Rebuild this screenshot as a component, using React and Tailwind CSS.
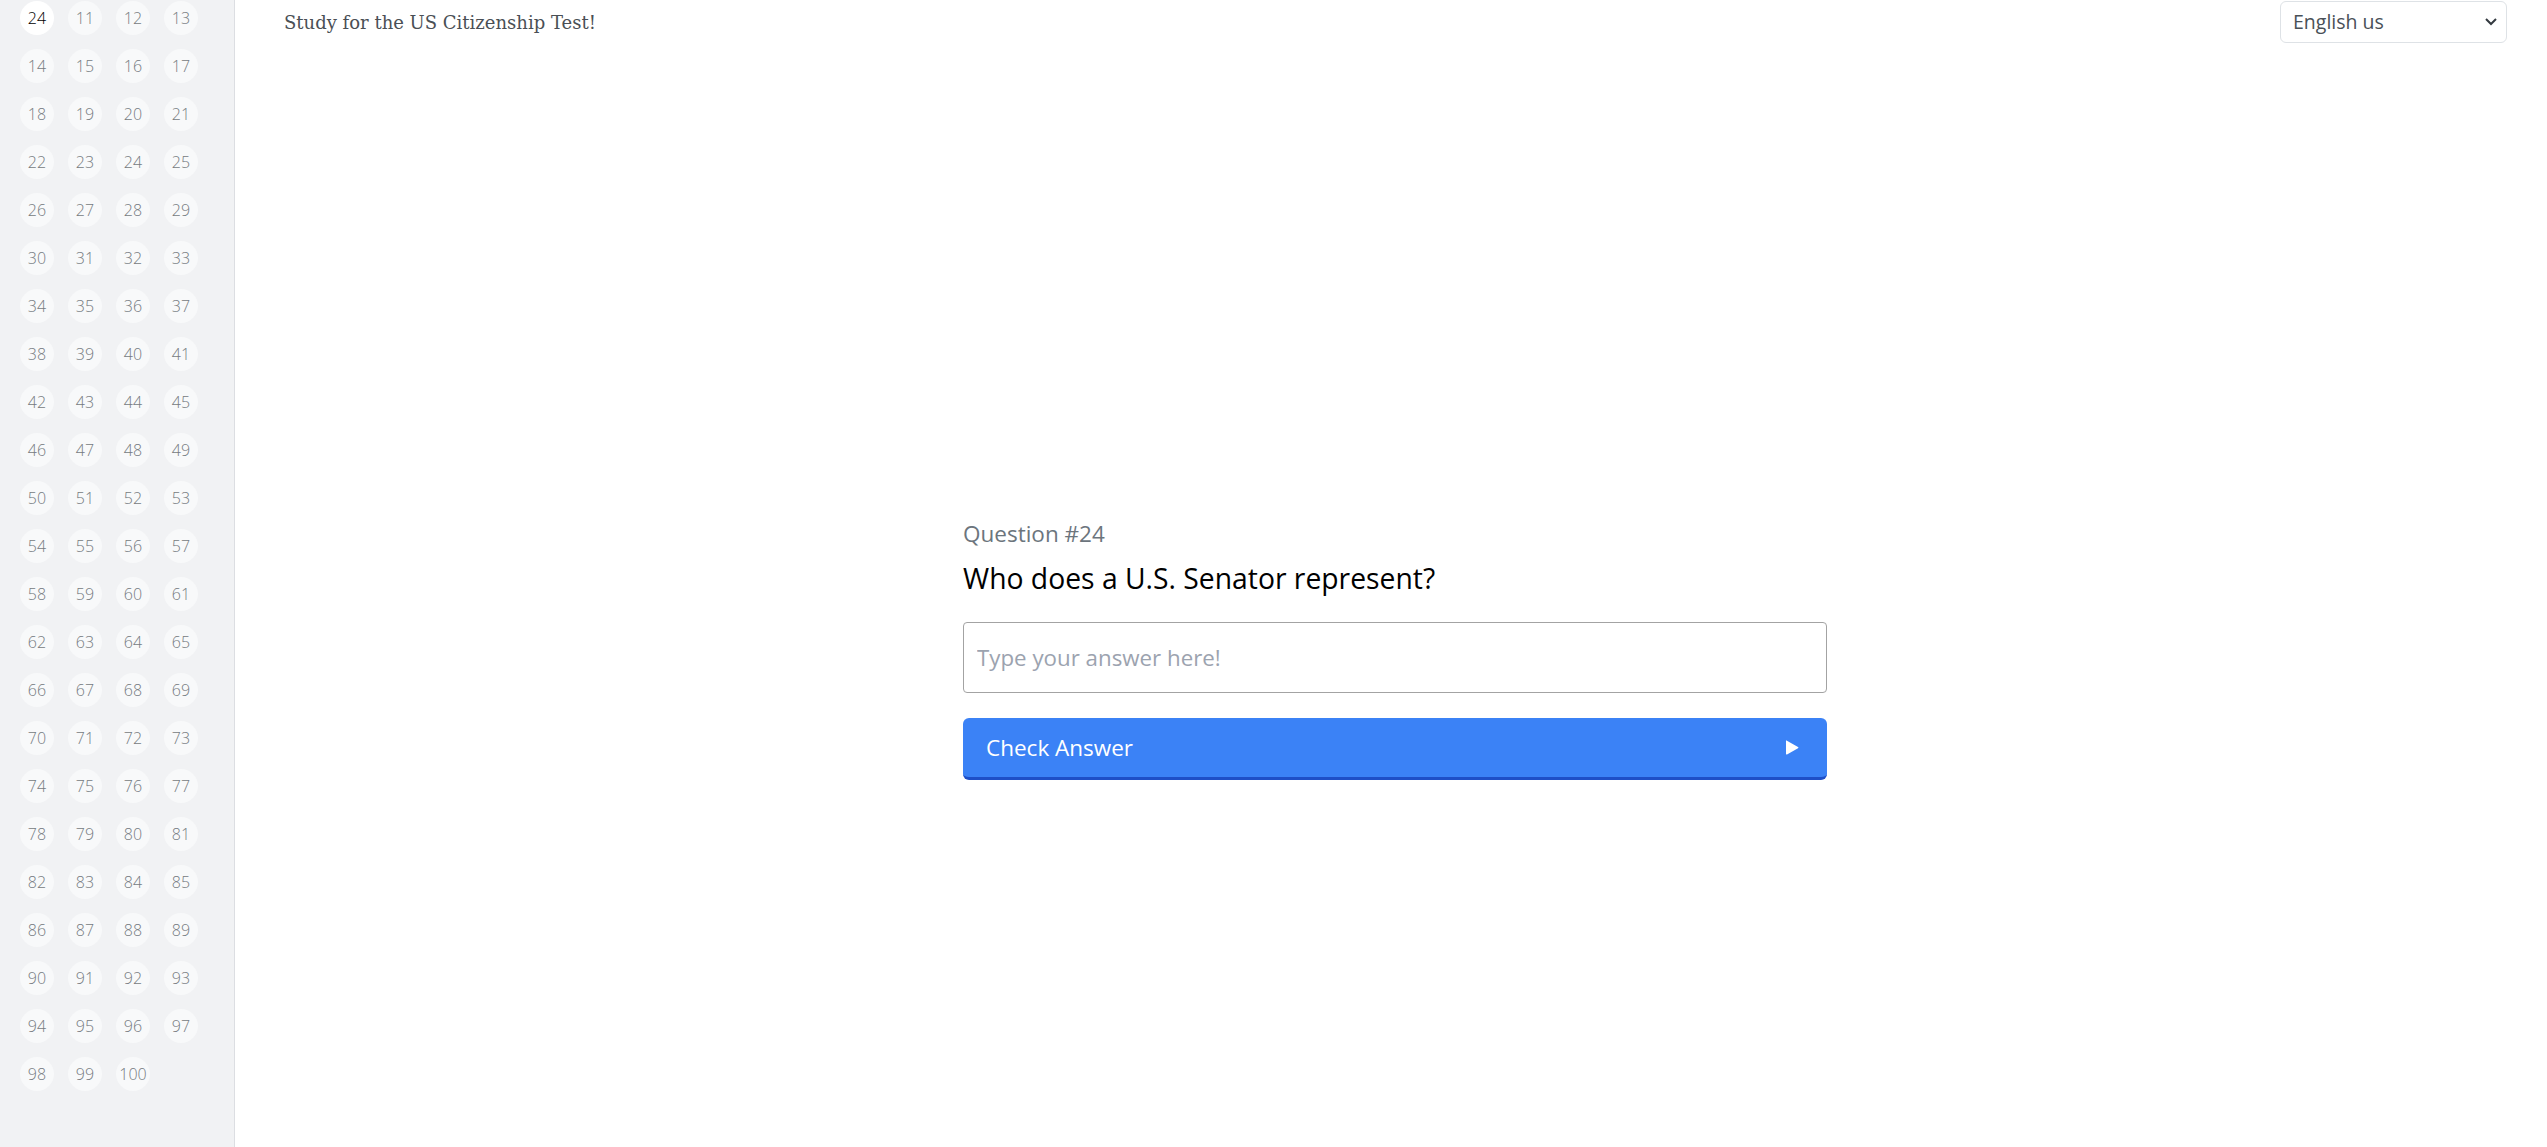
import React, { useState } from 'react';

const numbers = [24, ...Array.from({ length: 90 }, (_, i) => i + 11)];

const Sidebar = ({ current }) => (
  <aside className="w-[235px] shrink-0 h-screen overflow-hidden bg-[#f1f2f4] border-r border-[#dcdee2]">
    <ul className="grid grid-cols-[repeat(4,34px)] gap-[14px] pl-[20px] pt-[1px]">
      {numbers.map((n, i) => (
        <li key={i}>
          <button
            className={`flex items-center justify-center w-[34px] h-[34px] rounded-full text-[16px] font-light ${
              i === 0 ? 'bg-white text-black' : 'bg-[#f8f9fa] text-[#767b81]'
            }`}
          >
            {n}
          </button>
        </li>
      ))}
    </ul>
  </aside>
);

const App = () => {
  const [answer, setAnswer] = useState('');

  return (
    <div className="flex h-screen bg-white font-['Open_Sans',sans-serif] overflow-hidden">
      <Sidebar current={24} />

      <main className="flex-1 flex flex-col">
        {/* Header */}
        <header className="flex items-start justify-between pl-[49px] pr-[40px] pt-[1px]">
          <h1 className="mt-[8px] text-[18px] text-[#4a4f55] font-['DejaVu_Serif',serif]">
            Study for the US Citizenship Test!
          </h1>
          <div className="relative w-[227px] h-[42px]">
            <select className="appearance-none w-full h-full rounded-md border border-[#dee2e6] bg-white pl-[12px] pr-8 text-[19.5px] text-[#495057]">
              <option>English us</option>
            </select>
            <svg
              className="absolute right-[10px] top-[16px] pointer-events-none"
              width="12"
              height="9"
              viewBox="0 0 12 9"
              fill="none"
              stroke="#343a40"
              strokeWidth="2"
            >
              <path d="M1 2l5 5 5-5" />
            </svg>
          </div>
        </header>

        {/* Question */}
        <section className="ml-[728px] w-[864px] mt-[475px]">
          <p className="text-[22.5px] leading-[32px] text-[#6c757d]">Question #24</p>
          <h2 className="mt-[10px] text-[28.3px] leading-[36px] text-black">
            Who does a U.S. Senator represent?
          </h2>
          <input
            value={answer}
            onChange={(e) => setAnswer(e.target.value)}
            placeholder="Type your answer here!"
            className="mt-[26px] w-full h-[71px] rounded-[4px] border-[1.5px] border-[#a3a3a3] px-[13px] text-[22.3px] text-black placeholder:text-[#9ca3af] outline-none"
          />
          <button className="mt-[25px] flex items-center justify-between w-full h-[62px] rounded-md bg-[#3b82f6] border-b-[3px] border-[#1e4fc7] pl-[23px] pr-[26px] text-white text-[22.5px]">
            <span>Check Answer</span>
            <svg width="17" height="17" viewBox="0 0 17 17" fill="white">
              <path d="M2.5 1.5Q2 1 2 2.2v12.6q0 1.2 1 .6l11-6.2q1-.6 0-1.2z" />
            </svg>
          </button>
        </section>
      </main>
    </div>
  );
};

export default App;
